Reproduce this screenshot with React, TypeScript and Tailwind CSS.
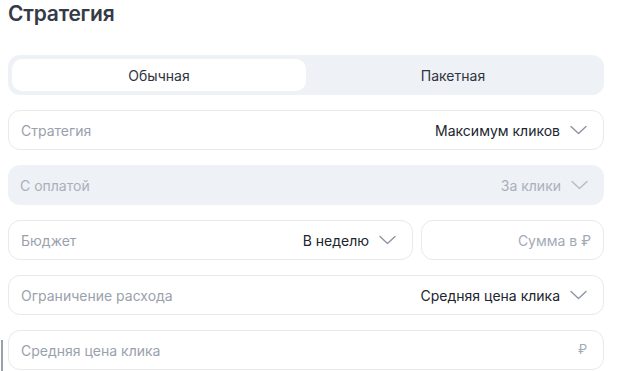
import { useState } from 'react'

function Chevron({ muted = false }: { muted?: boolean }) {
  return (
    <svg
      width="17"
      height="10"
      viewBox="0 0 17 10"
      fill="none"
      className={muted ? 'text-[#b5bcc8]' : 'text-[#8d95a3]'}
    >
      <path d="M1 1.5L8.5 8.5L16 1.5" stroke="currentColor" strokeWidth="1.4" strokeLinecap="round" strokeLinejoin="round" />
    </svg>
  )
}

function SelectRow({
  label,
  value,
  disabled = false,
  className = '',
}: {
  label: string
  value: string
  disabled?: boolean
  className?: string
}) {
  return (
    <div
      className={`flex h-10 items-center justify-between rounded-xl pl-3 pr-4 ${
        disabled ? 'bg-[#eef1f5]' : 'border border-[#e6e9ee] bg-white'
      } ${className}`}
    >
      <span className={`text-[14px] ${disabled ? 'text-[#a9b0bc]' : 'text-[#9aa1ad]'}`}>{label}</span>
      <div className="flex items-center gap-[10px]">
        <span className={`text-[14px] ${disabled ? 'text-[#a9b0bc]' : 'text-[#20252e]'}`}>{value}</span>
        <Chevron muted={disabled} />
      </div>
    </div>
  )
}

export default function App() {
  const [tab, setTab] = useState<'simple' | 'batch'>('simple')

  return (
    <div className="relative h-[371px] w-[624px] overflow-hidden bg-white font-['Inter',sans-serif]">
      <div className="pl-2 pr-5">
        <h1 className="pt-[1px] text-[21px] font-semibold leading-[26px] tracking-[-0.2px] text-[#343a46]">Стратегия</h1>

        {/* Tabs */}
        <div className="mt-[28px] flex h-10 rounded-xl bg-[#eef1f5] p-1">
          <button
            onClick={() => setTab('simple')}
            className={`flex-1 rounded-[10px] text-[14px] text-[#2f3440] ${tab === 'simple' ? 'bg-white' : ''}`}
          >
            Обычная
          </button>
          <button
            onClick={() => setTab('batch')}
            className={`flex-1 rounded-[10px] text-[14px] text-[#2f3440] ${tab === 'batch' ? 'bg-white' : ''}`}
          >
            Пакетная
          </button>
        </div>

        <div className="mt-[15px] flex flex-col gap-[15px]">
          <SelectRow label="Стратегия" value="Максимум кликов" />
          <SelectRow label="С оплатой" value="За клики" disabled />

          <div className="flex gap-2">
            <SelectRow label="Бюджет" value="В неделю" className="w-[405px]" />
            <div className="flex h-10 flex-1 items-center justify-end rounded-xl border border-[#e6e9ee] bg-white px-3">
              <span className="text-[14px] text-[#a3aab6]">Сумма в ₽</span>
            </div>
          </div>

          <SelectRow label="Ограничение расхода" value="Средняя цена клика" />

          <div className="flex h-10 items-center justify-between rounded-xl border border-[#e6e9ee] bg-white pl-3 pr-4">
            <span className="text-[14px] text-[#9aa1ad]">Средняя цена клика</span>
            <span className="text-[13px] text-[#a3aab6]">₽</span>
          </div>
        </div>
      </div>

      {/* stray caret at the left edge */}
      <div className="absolute left-[1px] top-[340px] h-[31px] w-[2px] bg-[#9aa1ad]" />
    </div>
  )
}
